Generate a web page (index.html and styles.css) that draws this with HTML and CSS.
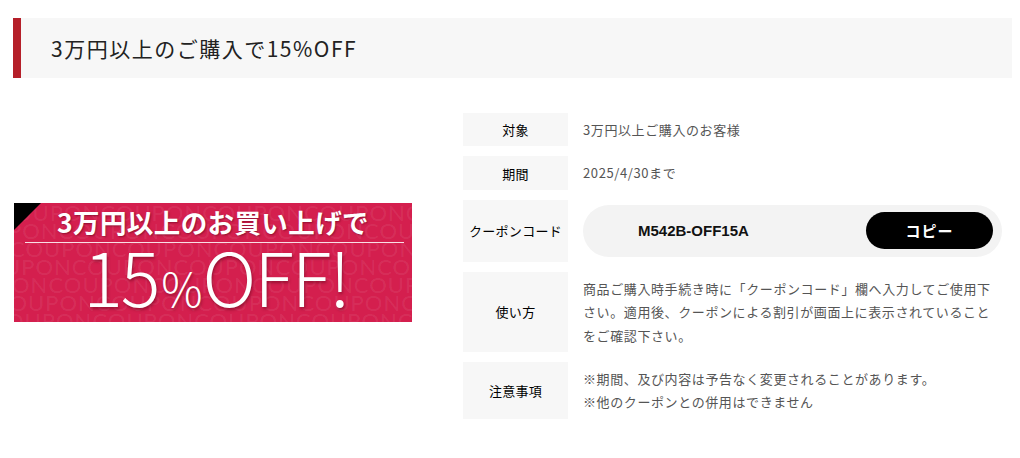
FILE: index.html
```html
<!DOCTYPE html>
<html lang="ja">
<head>
<meta charset="utf-8">
<title>クーポン</title>
<link rel="stylesheet" href="styles.css">
</head>
<body>
<div class="page">
  <h2 class="heading">3万円以上のご購入で15%OFF</h2>
  <div class="content">
    <div class="visual">
      <div class="banner">
        <div class="pattern" aria-hidden="true">
          <span class="r1">OUPONCOUPONCOUPONCOUPONCOUPONCOUPON</span>
          <span class="r2">PONCOUPONCOUPONCOUPONCOUPONCOUPONCO</span>
          <span class="r3">COUPONCOUPONCOUPONCOUPONCOUPONCOUPON</span>
          <span class="r4">UPONCOUPONCOUPONCOUPONCOUPONCOUPONC</span>
          <span class="r5">ONCOUPONCOUPONCOUPONCOUPONCOUPONCOU</span>
          <span class="r6">COUPONCOUPONCOUPONCOUPONCOUPONCOUPON</span>
          <span class="r7">OUPONCOUPONCOUPONCOUPONCOUPONCOUPON</span>
        </div>
        <div class="corner"></div>
        <div class="banner-body">
          <p class="banner-top">3万円以上のお買い上げで</p>
          <div class="banner-rule"></div>
          <p class="banner-big">15<span class="pct">%</span>OFF!</p>
        </div>
      </div>
    </div>
    <dl class="info">
      <div class="row">
        <dt>対象</dt>
        <dd>3万円以上ご購入のお客様</dd>
      </div>
      <div class="row">
        <dt>期間</dt>
        <dd>2025/4/30まで</dd>
      </div>
      <div class="row">
        <dt>クーポンコード</dt>
        <dd>
          <div class="coupon">
            <span class="code">M542B-OFF15A</span>
            <button class="copy" type="button">コピー</button>
          </div>
        </dd>
      </div>
      <div class="row">
        <dt>使い方</dt>
        <dd>商品ご購入時手続き時に「クーポンコード」欄へ入力してご使用下さい。適用後、クーポンによる割引が画面上に表示されていることをご確認下さい。</dd>
      </div>
      <div class="row">
        <dt>注意事項</dt>
        <dd>※期間、及び内容は予告なく変更されることがあります。<br>※他のクーポンとの併用はできません</dd>
      </div>
    </dl>
  </div>
</div>
</body>
</html>
```

FILE: styles.css
```css
* { box-sizing: border-box; }
html, body { margin: 0; padding: 0; background: #fff; }
body {
  font-family: "Noto Sans CJK JP", "Noto Sans", sans-serif;
  color: #222;
}
.page {
  padding: 18px 8px 0 13px;
}
.heading {
  margin: 0;
  height: 60px;
  display: flex;
  align-items: center;
  background: #f7f7f7;
  border-left: 8px solid #b51f29;
  padding-left: 30px;
  font-size: 21px;
  font-weight: 400;
  color: #222;
  letter-spacing: 1.5px;
}
.content {
  display: flex;
  margin-top: 35px;
}
.visual {
  width: 450px;
  flex: none;
  display: flex;
  align-items: center;
  padding-left: 1px;
  padding-bottom: 6px;
}
.banner {
  position: relative;
  width: 398px;
  height: 119px;
  background: #d41f4e;
  overflow: hidden;
}
.pattern {
  position: absolute;
  inset: 0;
  display: flex;
  flex-direction: column;
  font-family: "Lato", "Liberation Sans", sans-serif;
  font-size: 22px;
  line-height: 18px;
  color: rgba(255, 255, 255, 0.08);
  white-space: nowrap;
  letter-spacing: 1px;
  padding-top: 1px;
}
.pattern .r2 { margin-left: -6px; }
.pattern .r3 { margin-left: -4px; }
.pattern .r4 { margin-left: -10px; }
.pattern .r5 { margin-left: -2px; }
.pattern .r6 { margin-left: -20px; }
.pattern .r7 { margin-left: -8px; }
.corner {
  position: absolute;
  left: 0;
  top: 0;
  width: 0;
  height: 0;
  border-top: 27px solid #000;
  border-right: 27px solid transparent;
}
.banner-body {
  position: relative;
  display: flex;
  flex-direction: column;
  align-items: center;
}
.banner-top {
  margin: 0;
  height: 37px;
  font-size: 26.5px;
  line-height: 37px;
  font-weight: 700;
  color: #fff;
  letter-spacing: 0.4px;
  text-shadow: 1px 1px 2px rgba(80, 0, 20, 0.5);
}
.banner-rule {
  width: 379px;
  height: 1px;
  margin-top: 2px;
  margin-left: 2px;
  background: rgba(255, 255, 255, 0.85);
}
.banner-big {
  margin: 0;
  margin-left: 6px;
  font-family: "Noto Sans CJK JP", "Noto Sans", sans-serif;
  font-weight: 300;
  font-size: 74px;
  line-height: 64px;
  color: #fff;
  letter-spacing: -2px;
  text-shadow: 1px 2px 3px rgba(80, 0, 20, 0.45);
}
.banner-big .pct {
  font-size: 46px;
  letter-spacing: 0;
  margin-left: 3px;
}
.info {
  width: 540px;
  margin: 0;
  display: flex;
  flex-direction: column;
  gap: 10px;
}
.row {
  display: grid;
  grid-template-columns: 105px 1fr;
  column-gap: 15px;
}
.row dt {
  background: #f7f7f7;
  display: flex;
  align-items: center;
  justify-content: center;
  font-size: 13px;
  font-weight: 400;
  color: #000;
  letter-spacing: 0.3px;
}
.row dd {
  margin: 0;
  padding: 5px 0;
  font-size: 13px;
  line-height: 1.8;
  color: #555;
  letter-spacing: 0.6px;
}
.coupon {
  width: 419px;
  height: 52px;
  border-radius: 26px;
  background: #f3f3f3;
  display: flex;
  align-items: center;
  justify-content: space-between;
  padding: 0 9px 0 55px;
}
.code {
  font-family: "Liberation Sans", Arial, sans-serif;
  font-weight: 700;
  font-size: 15px;
  color: #111;
  letter-spacing: 0;
}
.copy {
  width: 127px;
  height: 37px;
  border: none;
  border-radius: 19px;
  background: #000;
  color: #fff;
  font-family: "Noto Sans CJK JP", sans-serif;
  font-weight: 700;
  font-size: 15px;
  letter-spacing: 1px;
  padding: 0;
  cursor: pointer;
}
```
